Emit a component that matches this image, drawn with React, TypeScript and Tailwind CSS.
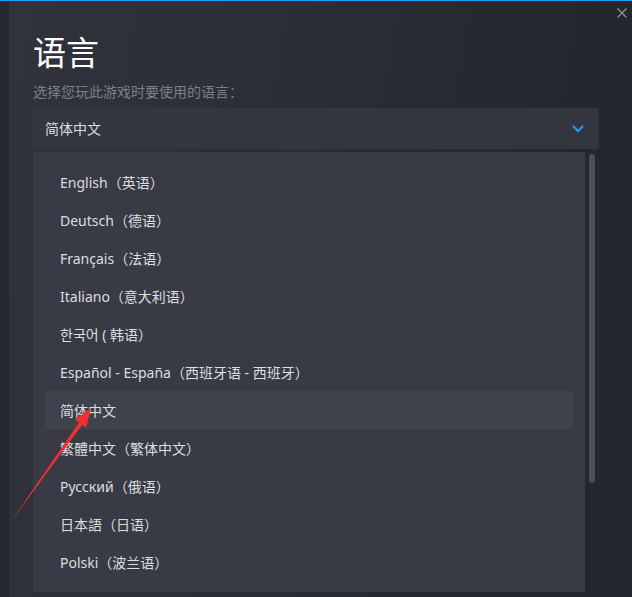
import React from "react";

const items = [
  "English（英语）",
  "Deutsch（德语）",
  "Français（法语）",
  "Italiano（意大利语）",
  "한국어 ( 韩语）",
  "Español - España（西班牙语 - 西班牙）",
  "简体中文",
  "繁體中文（繁体中文）",
  "Русский（俄语）",
  "日本語（日语）",
  "Polski（波兰语）",
];

export default function App() {
  return (
    <div className="relative w-[632px] h-[597px] flex overflow-hidden border-t border-[#1a9fff] font-['Noto_Sans','Noto_Sans_CJK_SC',sans-serif] bg-[#24262d]">
      <div className="w-[9px] shrink-0 bg-[#262830]" />
      <div className="relative flex-1 flex flex-col pl-[24px] pr-[33px] bg-[linear-gradient(100deg,#30333b_0%,#2b2e36_40%,#24262d_85%)]">
        <button className="absolute right-[5px] top-[7px] w-[10px] h-[10px] text-[#8b8f96]">
          <svg viewBox="0 0 10 10" width="10" height="10" fill="none" stroke="currentColor" strokeWidth="1.4">
            <path d="M0.5 0.5 L9.5 9.5 M9.5 0.5 L0.5 9.5" />
          </svg>
        </button>
        <h1 className="mt-[32px] text-[33px] leading-[40px] text-white font-normal">语言</h1>
        <p className="mt-[10px] text-[14px] leading-[18px] text-[#7b7f87]">选择您玩此游戏时要使用的语言：</p>
        <div className="mt-[7px] h-[41px] rounded-[3px] bg-[#33363f] flex items-center justify-between pl-[12px] pr-[15px]">
          <span className="text-[14px] text-[#dcdedf]">简体中文</span>
          <svg width="12" height="8" viewBox="0 0 12 8" fill="none" stroke="#1a9fff" strokeWidth="2">
            <path d="M1 1 L6 6 L11 1" />
          </svg>
        </div>
        <div className="mt-[3px] flex">
          <div className="w-[552px] bg-[#383b45] pt-[11px] pb-[11px] px-[12px]">
            {items.map((t) => (
              <div
                key={t}
                className={
                  "h-[38px] flex items-center pl-[15px] text-[14px] text-[#dcdedf] " +
                  (t === "简体中文" ? "bg-[#3e424c]" : "")
                }
              >
                {t}
              </div>
            ))}
          </div>
          <div className="ml-[4px] mt-[2px] w-[6px] h-[329px] rounded-[3px] bg-[#4b4f59]" />
        </div>
      </div>
      <svg className="absolute left-0 top-0 pointer-events-none" width="632" height="597">
        <polygon
          points="10,522 79,421.4 74.9,418.6 91,407 86.3,426.6 82.2,423.8"
          fill="#f0302f"
        />
      </svg>
    </div>
  );
}
